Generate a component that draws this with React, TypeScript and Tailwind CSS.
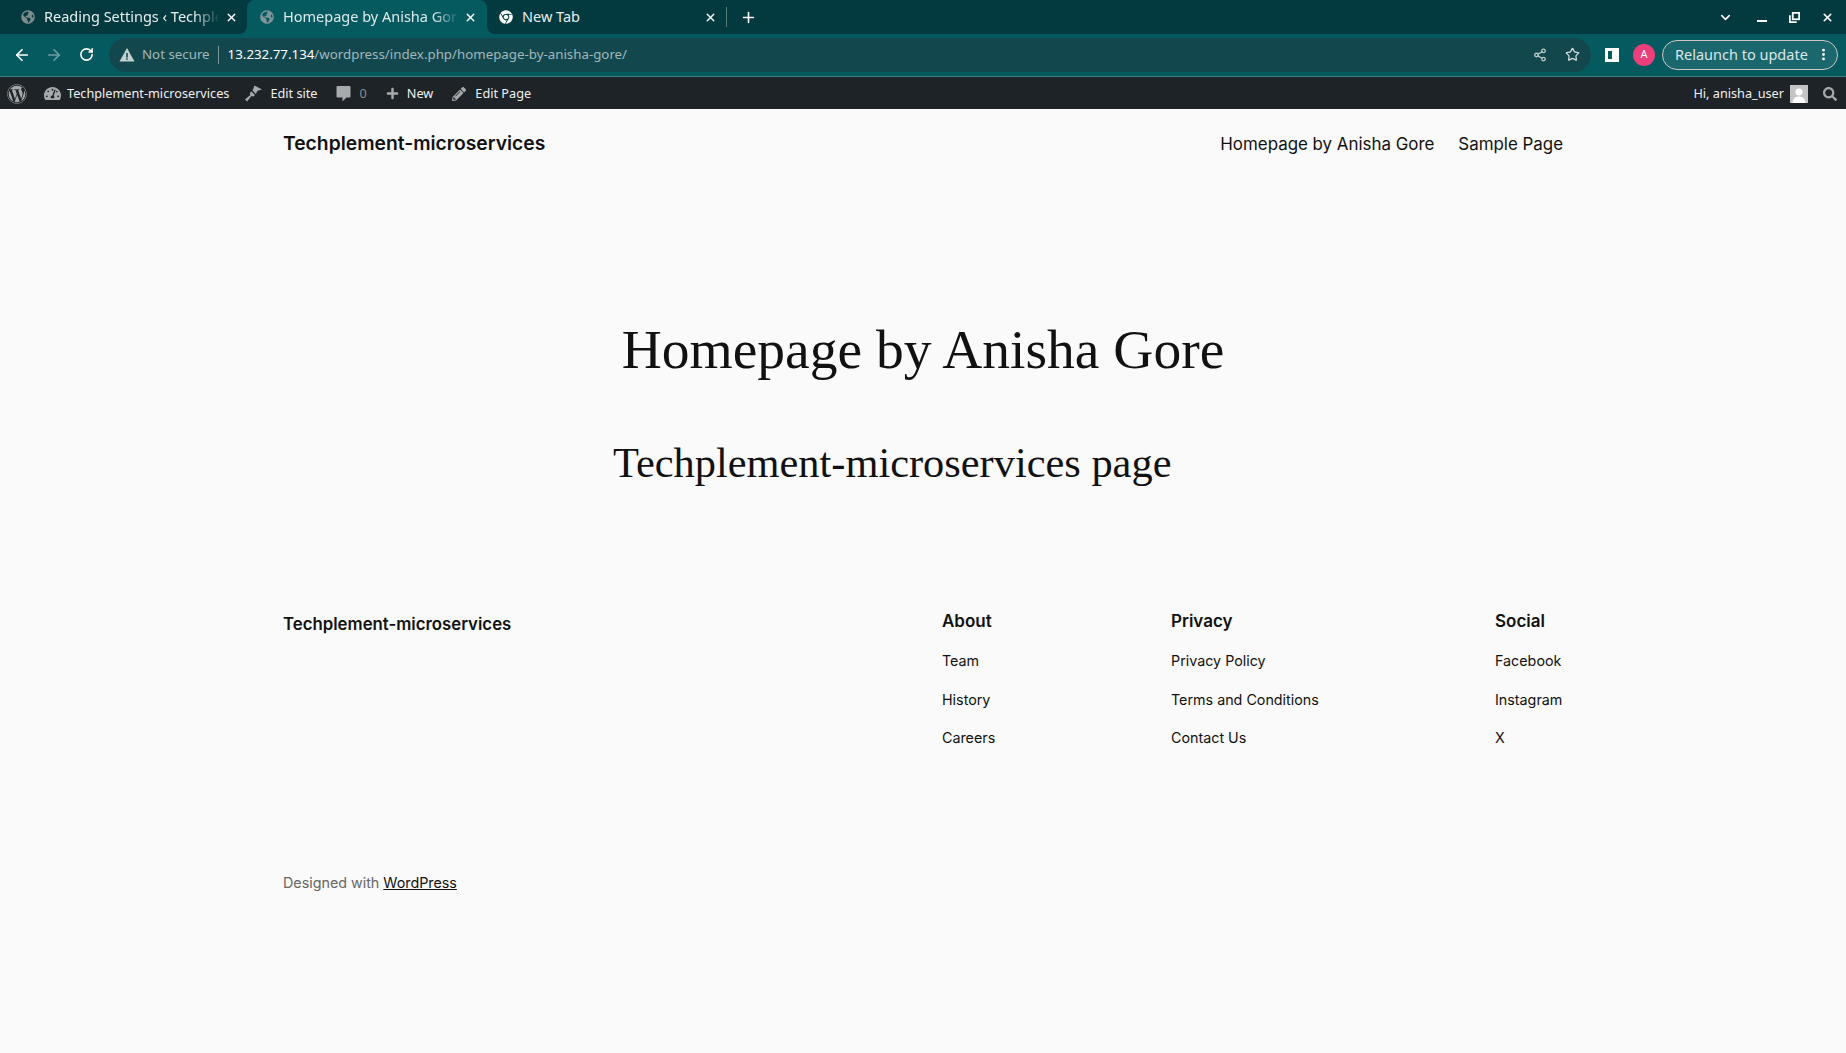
import { ArrowLeft, ArrowRight, RotateCw, Star, ChevronDown, X, Plus, EllipsisVertical, Share2 } from 'lucide-react';
import { FaChrome, FaGlobeAmericas, FaPencilAlt, FaPlus, FaSearch, FaTachometerAlt, FaWordpress } from 'react-icons/fa';

const uiFont = "font-['Noto_Sans',sans-serif]";
const pageFont = "font-['Inter',sans-serif]";
const tabFade = '[mask-image:linear-gradient(to_right,black_85%,transparent)]';

const footerColumns = [
  { title: 'About', width: 'w-[229px]', links: ['Team', 'History', 'Careers'] },
  { title: 'Privacy', width: 'w-[324px]', links: ['Privacy Policy', 'Terms and Conditions', 'Contact Us'] },
  { title: 'Social', width: 'w-[68px]', links: ['Facebook', 'Instagram', 'X'] },
];

function BrowserChrome() {
  return (
    <div className={uiFont}>
      {/* Tab strip */}
      <div className="flex h-[34px] bg-[#033a40] text-white">
        <div className="w-[247px] bg-[#055a60]">
          <div className="flex h-[34px] items-center rounded-br-[8px] bg-[#033a40] pl-[21px] pr-[9px]">
            <FaGlobeAmericas className="h-[14px] w-[14px] shrink-0 text-[#7f8c8e]" />
            <span className={`ml-[9px] flex-1 overflow-hidden whitespace-nowrap text-[14.500px] text-[#e8eeee] ${tabFade}`}>Reading Settings ‹ Techplement</span>
            <X className="ml-[5px] h-[13px] w-[13px] shrink-0 text-white" strokeWidth={2.5} />
          </div>
        </div>
        <div className="flex h-[34px] w-[240px] items-center rounded-t-[8px] bg-[#055a60] pl-[13px] pr-[10px]">
          <FaGlobeAmericas className="h-[14px] w-[14px] shrink-0 text-[#7d9699]" />
          <span className={`ml-[9px] flex-1 overflow-hidden whitespace-nowrap text-[14.500px] text-[#dfe9ea] ${tabFade}`}>Homepage by Anisha Gore</span>
          <X className="ml-[5px] h-[13px] w-[13px] shrink-0 text-white" strokeWidth={2.5} />
        </div>
        <div className="w-[239px] bg-[#055a60]">
          <div className="flex h-[34px] items-center rounded-bl-[8px] bg-[#033a40] pl-[12px] pr-[9px]">
            <FaChrome className="h-[14px] w-[14px] shrink-0 text-white" />
            <span className="ml-[9px] flex-1 text-[14.500px] text-[#e8eeee]">New Tab</span>
            <X className="h-[13px] w-[13px] shrink-0 text-white" strokeWidth={2.5} />
          </div>
        </div>
        <div className="flex h-[34px] flex-1 items-center">
          <div className="h-[20px] w-px bg-[#5d7c7f]" />
          <Plus className="ml-[13px] h-[17px] w-[17px] shrink-0 text-white" strokeWidth={2.25} />
          <ChevronDown className="ml-auto mr-[24px] h-[15px] w-[15px] text-white" strokeWidth={2.5} />
          <div className="mr-[22px] mt-[7px] h-[2px] w-[10px] bg-white" />
          <svg viewBox="0 0 10 10" className="mr-[21px] h-[11px] w-[11px]" fill="none" stroke="white" strokeWidth="1.6">
            <rect x="3.4" y="0.8" width="5.8" height="5.8" />
            <path d="M0.8 3v6.2H7" />
          </svg>
          <X className="mr-[12px] h-[13px] w-[13px] text-white" strokeWidth={3} />
        </div>
      </div>

      {/* Address row */}
      <div className="flex h-[43px] items-center border-b border-[#3d7f84] bg-[#055a60] pb-[1px]">
        <ArrowLeft className="ml-[13px] h-[18px] w-[18px] text-white" strokeWidth={2.25} />
        <ArrowRight className="ml-[14px] h-[18px] w-[18px] text-[#6f9da0]" strokeWidth={2.25} />
        <RotateCw className="ml-[16px] h-[15px] w-[15px] text-white" strokeWidth={2.5} />
        <div className="ml-[15px] flex h-[34px] w-[1482px] items-center rounded-full bg-[#12474e] pl-[10px] pr-[11px]">
          <svg viewBox="0 0 16 15" className="h-[15px] w-[16px]">
            <path d="M8 1 15.500 14.500H.5z" fill="#c4d0d1" />
            <path d="M7.200 6h1.600v4.500H7.200zM7.200 11.300h1.600v1.500H7.200z" fill="#12474e" />
          </svg>
          <span className="ml-[7px] text-[13.300px] text-[#a3b7b9]">Not secure</span>
          <div className="ml-[8px] h-[18px] w-px bg-[#7d9699]" />
          <span className="ml-[9px] text-[13.300px] text-[#a3b7b9]">
            <span className="text-white">13.232.77.134</span>/wordpress/index.php/homepage-by-anisha-gore/
          </span>
          <Share2 className="ml-auto h-[14px] w-[14px] text-[#b8c8ca]" strokeWidth={2.25} />
          <Star className="ml-[18px] h-[15px] w-[15px] text-[#d2dcdd]" strokeWidth={2} />
        </div>
        <div className="ml-[14px] h-[14px] w-[14px] border-[3px] border-r-[7px] border-white" />
        <div className="ml-[14px] flex h-[22px] w-[22px] items-center justify-center rounded-full bg-[#ec3f79] text-[11px] text-white">A</div>
        <div className="ml-[7px] flex h-[30px] w-[176px] items-center rounded-full border border-[#d5c5c0] bg-[#1a676d] pl-[12px] pr-[6px] text-[14.500px] text-[#dce6e7]">
          Relaunch to update
          <EllipsisVertical className="ml-auto h-[15px] w-[15px] text-white" strokeWidth={2.5} />
        </div>
      </div>
    </div>
  );
}

function AdminBar() {
  return (
    <div className={`flex h-[32px] items-center bg-[#1d2327] pt-[1px] text-[12.700px] text-[#f0f0f1] ${uiFont}`}>
      <FaWordpress className="ml-[7px] h-[20px] w-[20px] text-[#a7aaad]" />
      <FaTachometerAlt className="ml-[17px] h-[17px] w-[17px] text-[#a7aaad]" />
      <span className="ml-[6px]">Techplement-microservices</span>
      <svg viewBox="0 0 19 19" className="ml-[15px] h-[19px] w-[19px]" fill="#a7aaad">
        <path d="M10.500 1.500 18 5.500l-4.500 1.200-1.600 3.300L8.500 6.500z" />
        <path d="M7.500 7.500l3.500 3.500-1.600 1.600-2-.5-4.300 5.400-2.100-2.100 5.300-4.300-.4-2z" />
      </svg>
      <span className="ml-[7px]">Edit site</span>
      <svg viewBox="0 0 15 17" className="ml-[18px] h-[17px] w-[15px]" fill="#a7aaad">
        <path d="M1.500 1h12a1 1 0 0 1 1 1v9.500a1 1 0 0 1-1 1H10.500L6.500 16.500v-4h-5a1 1 0 0 1-1-1V2a1 1 0 0 1 1-1z" />
      </svg>
      <span className="ml-[9px] text-[#8c8f94]">0</span>
      <FaPlus className="ml-[19px] h-[13px] w-[13px] text-[#a7aaad]" />
      <span className="ml-[8px]">New</span>
      <FaPencilAlt className="ml-[19px] h-[14px] w-[14px] text-[#a7aaad]" />
      <span className="ml-[9px]">Edit Page</span>
      <span className="ml-auto">Hi, anisha_user</span>
      <div className="ml-[6px] flex h-[18px] w-[18px] items-end justify-center overflow-hidden bg-[#c4c4c4]">
        <svg viewBox="0 0 18 18" className="h-[18px] w-[18px]" fill="white">
          <circle cx="9" cy="7" r="3.600" />
          <path d="M2.500 18c.4-4.500 3-6.500 6.500-6.500s6.100 2 6.500 6.500z" />
        </svg>
      </div>
      <FaSearch className="ml-[15px] mr-[9px] h-[14px] w-[14px] text-[#a7aaad]" />
    </div>
  );
}

export default function App() {
  return (
    <div className="min-h-[1053px] bg-[#fafafa] text-[#111111]">
      <BrowserChrome />
      <AdminBar />

      <div className={`mx-auto w-[1280px] ${pageFont}`}>
        <header className="flex h-[70px] items-center justify-between pb-[2px]">
          <div className="text-[19.300px] font-semibold">Techplement-microservices</div>
          <nav className="mt-[3px] flex gap-[24px] text-[16.900px] font-normal">
            <span>Homepage by Anisha Gore</span>
            <span>Sample Page</span>
          </nav>
        </header>

        <main className="font-['Liberation_Serif',serif]">
          <h1 className="mt-[138px] text-center text-[55.500px] leading-[66px] font-normal">Homepage by Anisha Gore</h1>
          <h2 className="mx-auto mt-[54px] w-[620px] text-[42.400px] leading-[52px] font-normal whitespace-nowrap">Techplement-microservices page</h2>
        </main>

        <footer className="mt-[120px]">
          <div className="flex">
            <div className="w-[659px] pt-[3px] text-[16.800px] font-semibold">Techplement-microservices</div>
            {footerColumns.map((col) => (
              <div key={col.title} className={col.width}>
                <div className="text-[17px] leading-[24px] font-semibold">{col.title}</div>
                <div className="mt-[17px] flex flex-col gap-[17px] text-[14.300px] leading-[21.500px]">
                  {col.links.map((link) => (
                    <span key={link} className="whitespace-nowrap">{link}</span>
                  ))}
                </div>
              </div>
            ))}
          </div>
          <p className="mt-[123px] text-[14.300px] text-[#666666]">
            Designed with <span className="text-[#111111] underline">WordPress</span>
          </p>
        </footer>
      </div>
    </div>
  );
}
